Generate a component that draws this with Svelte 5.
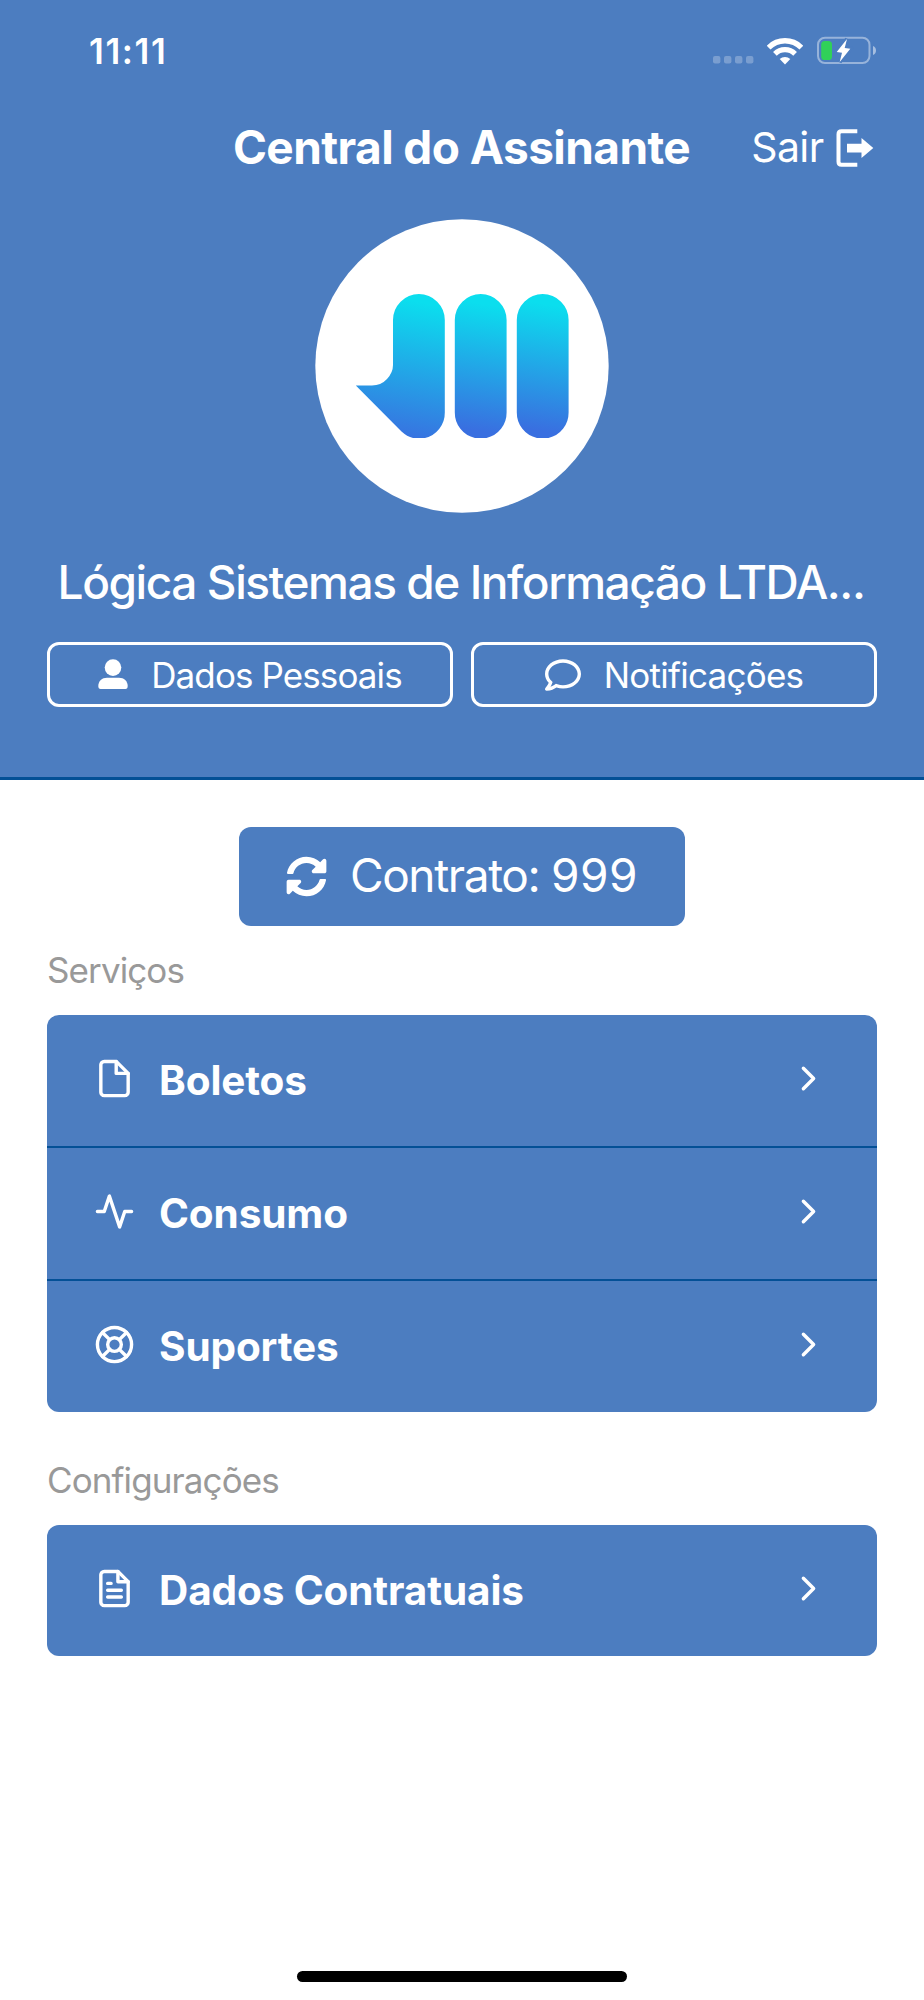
<script lang="ts">
  interface MenuItem {
    label: string;
    icon: 'file' | 'activity' | 'buoy' | 'file-text';
  }

  interface Section {
    title: string;
    items: MenuItem[];
  }

  const sections: Section[] = [
    {
      title: 'Serviços',
      items: [
        { label: 'Boletos', icon: 'file' },
        { label: 'Consumo', icon: 'activity' },
        { label: 'Suportes', icon: 'buoy' }
      ]
    },
    {
      title: 'Configurações',
      items: [{ label: 'Dados Contratuais', icon: 'file-text' }]
    }
  ];

  const company = 'Lógica Sistemas de Informação LTDA...';
  const contract = 999;
</script>

<div class="screen">
  <header>
    <!-- Status bar -->
    <div class="status-bar">
      <span class="time">11:11</span>
      <div class="indicators">
        <svg class="signal" width="42" height="8" viewBox="0 0 42 8">
          {#each [0, 11, 22, 33] as x}
            <rect {x} y="0" width="7.4" height="7.4" rx="2" fill="#fff" fill-opacity="0.26" />
          {/each}
        </svg>
        <svg class="wifi" width="36" height="27" viewBox="0 0 36 27" fill="none" stroke="#fff">
          <path d="M1.6 9.6A23.2 23.2 0 0 1 34.4 9.6" stroke-width="5.4" />
          <path d="M7.9 15.9A14.3 14.3 0 0 1 28.1 15.9" stroke-width="5.2" />
          <path d="M18 26.5L12.7 21A8 8 0 0 1 23.3 21Z" fill="#fff" stroke="none" />
        </svg>
        <svg class="battery" width="62" height="30" viewBox="0 0 62 30">
          <rect x="2" y="1.7" width="51.5" height="25.3" rx="7" fill="none" stroke="#fff" stroke-opacity="0.42" stroke-width="2" />
          <path d="M57 10v9q3-1.3 3-4.5T57 10z" fill="#fff" fill-opacity="0.5" />
          <rect x="5.2" y="5" width="10.8" height="19" rx="3.6" fill="#30d158" />
          <path
            d="M31 3L20.7 16L26 16.7L23.7 26L34.3 12.7L28.7 12Z"
            fill="#fff"
            stroke="#4c7dc0"
            stroke-width="4"
            paint-order="stroke"
          />
        </svg>
      </div>
    </div>

    <nav>
      <h1>Central do Assinante</h1>
      <button class="logout">
        <span>Sair</span>
        <svg width="38" height="38" viewBox="0 0 38 38">
          <path d="M21.3 2.3H5.5Q2.5 2.3 2.5 5.3V32.7Q2.5 35.7 5.5 35.7H21.3" fill="none" stroke="#fff" stroke-width="4" />
          <path d="M11 14.7H25.5V9L37.3 19L25.5 29V23.5H11Z" fill="#fff" />
        </svg>
      </button>
    </nav>

    <!-- Logo -->
    <svg class="avatar" width="294" height="294" viewBox="0 0 294 294">
      <defs>
        <linearGradient id="bar-1" gradientUnits="userSpaceOnUse" x1="110" y1="84" x2="86" y2="222">
          <stop offset="0" stop-color="#0bdeee" />
          <stop offset="1" stop-color="#396fe0" />
        </linearGradient>
        <linearGradient id="bar-2" gradientUnits="userSpaceOnUse" x1="176" y1="86" x2="157" y2="211">
          <stop offset="0" stop-color="#0bdeee" />
          <stop offset="1" stop-color="#396fe0" />
        </linearGradient>
        <linearGradient id="bar-3" gradientUnits="userSpaceOnUse" x1="238" y1="86" x2="219" y2="211">
          <stop offset="0" stop-color="#0bdeee" />
          <stop offset="1" stop-color="#396fe0" />
        </linearGradient>
      </defs>
      <circle cx="147" cy="147" r="146.7" fill="#fff" />
      <path
        d="M78 101A25.9 25.9 0 0 1 129.8 101V193.5A25.9 25.9 0 0 1 110 219H98Q92 217.5 86.5 212.5L40.8 166.5H57Q66 166.5 72 160T78 146Z"
        fill="url(#bar-1)"
      />
      <path
        d="M139.8 101A25.9 25.9 0 0 1 191.6 101V193.5A25.9 25.9 0 0 1 171.5 219H159.9A25.9 25.9 0 0 1 139.8 193.5Z"
        fill="url(#bar-2)"
      />
      <path
        d="M201.8 101A25.9 25.9 0 0 1 253.6 101V193.5A25.9 25.9 0 0 1 233.5 219H221.9A25.9 25.9 0 0 1 201.8 193.5Z"
        fill="url(#bar-3)"
      />
    </svg>

    <p class="company">{company}</p>

    <div class="actions">
      <button class="outline personal">
        <svg width="30" height="31" viewBox="0 0 30 31" fill="#fff">
          <circle cx="15" cy="8.6" r="8.3" />
          <path d="M9 18.7H21C26 18.7 29.7 22 29.7 27Q29.7 30 27.5 30H2.5Q.3 30 .3 27C.3 22 4 18.7 9 18.7Z" />
        </svg>
        <span>Dados Pessoais</span>
      </button>
      <button class="outline notifications">
        <svg width="36" height="36" viewBox="0 0 512 512" fill="#fff">
          <path
            d="M256 32C114.6 32 0 125.1 0 240c0 47.6 19.9 91.2 52.9 126.3C38 405.7 7 439.1 6.5 439.5c-6.6 7-8.4 17.2-4.6 26S14.4 480 24 480c61.5 0 110-25.7 139.1-46.3C192 442.8 223.2 448 256 448c141.4 0 256-93.1 256-208S397.4 32 256 32zm0 368c-26.7 0-53.1-4.1-78.4-12.1l-22.7-7.2-19.5 13.8c-14.3 10.1-33.9 21.4-57.5 29 7.3-12.1 14.4-25.7 19.9-40.2l10.6-28.1-20.6-21.8C69.7 314.1 48 282.2 48 240c0-88.2 93.3-160 208-160s208 71.8 208 160-93.3 160-208 160z"
          />
        </svg>
        <span>Notificações</span>
      </button>
    </div>
  </header>

  <main>
    <button class="contract">
      <svg width="41" height="41" viewBox="0 0 512 512" fill="#fff">
        <path
          d="M370.72 133.28C339.458 104.008 298.888 87.962 255.848 88c-77.458.068-144.328 53.178-162.791 126.85-1.344 5.363-6.122 9.15-11.651 9.15H24.103c-7.498 0-13.194-6.807-11.807-14.176C33.933 94.924 134.813 8 256 8c66.448 0 126.791 26.136 171.315 68.685L463.03 40.97C478.149 25.851 504 36.559 504 57.941V192c0 13.255-10.745 24-24 24H345.941c-21.382 0-32.09-25.851-16.971-40.971l41.75-41.749zM32 296h134.059c21.382 0 32.09 25.851 16.971 40.971l-41.75 41.75c31.262 29.273 71.835 45.319 114.876 45.28 77.418-.07 144.315-53.144 162.787-126.849 1.344-5.363 6.122-9.15 11.651-9.15h57.304c7.498 0 13.194 6.807 11.807 14.176C478.067 417.076 377.187 504 256 504c-66.448 0-126.791-26.136-171.315-68.685L48.97 471.03C33.851 486.149 8 475.441 8 454.059V320c0-13.255 10.745-24 24-24z"
        />
      </svg>
      <span class="contract-label">Contrato: <span class="number">{contract}</span></span>
    </button>

    {#each sections as section}
      <section>
        <h2>{section.title}</h2>
        <ul>
          {#each section.items as item}
            <li>
              <svg class="icon" viewBox="0 0 24 24">
                {#if item.icon === 'file'}
                  <path d="M13 2H6a2 2 0 0 0-2 2v16a2 2 0 0 0 2 2h12a2 2 0 0 0 2-2V9z" />
                  <polyline points="13 2 13 9 20 9" />
                {:else if item.icon === 'activity'}
                  <polyline points="22 12 18 12 15 21 9 3 6 12 2 12" />
                {:else if item.icon === 'buoy'}
                  <circle cx="12" cy="12" r="10" />
                  <circle cx="12" cy="12" r="4" />
                  <path d="M4.93 4.93l4.24 4.24M14.83 14.83l4.24 4.24M14.83 9.17l4.24-4.24M4.93 19.07l4.24-4.24" />
                {:else}
                  <path d="M14 2H6a2 2 0 0 0-2 2v16a2 2 0 0 0 2 2h12a2 2 0 0 0 2-2V8z" />
                  <polyline points="14 2 14 8 20 8" />
                  <path d="M16 13H8M16 17H8M10 9H8" />
                {/if}
              </svg>
              <span class="label">{item.label}</span>
              <svg class="icon" viewBox="0 0 24 24">
                <polyline points="9 18 15 12 9 6" />
              </svg>
            </li>
          {/each}
        </ul>
      </section>
    {/each}
  </main>

  <footer>
    <div class="home-indicator"></div>
  </footer>
</div>

<style>
  :global(body) {
    margin: 0;
    background: #fff;
  }

  .screen {
    display: flex;
    flex-direction: column;
    width: 924px;
    height: 2000px;
    overflow: hidden;
    background: #fff;
    font-family: Inter, 'Liberation Sans', sans-serif;
    -webkit-font-smoothing: antialiased;
  }

  svg {
    display: block;
    flex: none;
  }

  button {
    display: flex;
    align-items: center;
    margin: 0;
    padding: 0;
    border: none;
    background: none;
    color: #fff;
    font-family: inherit;
    white-space: nowrap;
  }

  /* Header */
  header {
    display: flex;
    flex-direction: column;
    align-items: center;
    box-sizing: border-box;
    height: 780px;
    border-bottom: 3px solid #035096;
    background: #4c7dc0;
    color: #fff;
  }

  .status-bar {
    display: flex;
    justify-content: space-between;
    align-items: center;
    box-sizing: border-box;
    width: 100%;
    height: 101px;
    padding: 0 46px 0 89px;
  }

  .time {
    font-size: 35px;
    font-weight: 600;
    letter-spacing: 1.6px;
  }

  .indicators {
    display: flex;
    align-items: flex-end;
  }

  .signal {
    margin: 0 12px 2px 0;
  }

  .wifi {
    margin: 0 13px 1px 0;
  }

  nav {
    display: grid;
    grid-template-columns: 1fr auto 1fr;
    align-items: center;
    box-sizing: border-box;
    width: 100%;
    height: 93px;
    padding: 0 50px;
  }

  h1 {
    grid-column: 2;
    margin: 0 1px 1px 0;
    font-size: 46px;
    font-weight: 700;
    letter-spacing: -0.58px;
    line-height: 60px;
    white-space: nowrap;
  }

  .logout {
    justify-self: end;
    gap: 12.5px;
    font-size: 41px;
    letter-spacing: -0.6px;
    line-height: 50px;
  }

  .logout span {
    margin-bottom: 1px;
  }

  .avatar {
    margin-top: 25px;
  }

  .company {
    margin: 39px 0 30px;
    padding-right: 2px;
    font-size: 46px;
    font-weight: 500;
    letter-spacing: -1.43px;
    line-height: 60px;
    white-space: nowrap;
  }

  .actions {
    display: flex;
    gap: 18px;
    box-sizing: border-box;
    width: 100%;
    padding: 0 47px;
  }

  .outline {
    flex: 1;
    justify-content: center;
    box-sizing: border-box;
    height: 65px;
    border: 3px solid #fff;
    border-radius: 12px;
    font-size: 35px;
    font-weight: 400;
  }

  .personal {
    gap: 23px;
    letter-spacing: -0.9px;
  }

  .notifications {
    gap: 23px;
    letter-spacing: -0.75px;
  }

  /* Content */
  main {
    display: flex;
    flex: 1;
    flex-direction: column;
    padding: 47px 47px 0;
  }

  .contract {
    align-self: center;
    justify-content: center;
    gap: 23px;
    width: 446px;
    height: 99px;
    border-radius: 12px;
    background: #4c7dc0;
    font-size: 46px;
    font-weight: 400;
  }

  .contract-label {
    margin-bottom: 4px;
    letter-spacing: -1.4px;
  }

  .number {
    letter-spacing: 0.5px;
  }

  h2 {
    margin: 22px 0;
    color: #999;
    font-size: 35px;
    font-weight: 400;
    letter-spacing: -0.9px;
    line-height: 45px;
  }

  section + section h2 {
    margin-top: 46px;
  }

  ul {
    margin: 0;
    padding: 0;
    overflow: hidden;
    border-radius: 12px;
    background: #4c7dc0;
    list-style: none;
  }

  li {
    display: flex;
    align-items: center;
    height: 131px;
    padding: 0 48px 0 47px;
    color: #fff;
  }

  li + li {
    border-top: 2px solid #035096;
  }

  .icon {
    width: 41px;
    height: 41px;
    margin-bottom: 5px;
    fill: none;
    stroke: #fff;
    stroke-width: 2;
    stroke-linecap: round;
    stroke-linejoin: round;
  }

  .label {
    flex: 1;
    margin-left: 24px;
    font-size: 40.5px;
    font-weight: 700;
    letter-spacing: -0.12px;
    line-height: 50px;
  }

  /* Home indicator */
  footer {
    display: flex;
    justify-content: center;
    padding-bottom: 18px;
  }

  .home-indicator {
    width: 330px;
    height: 11px;
    border-radius: 6px;
    background: #000;
  }
</style>
